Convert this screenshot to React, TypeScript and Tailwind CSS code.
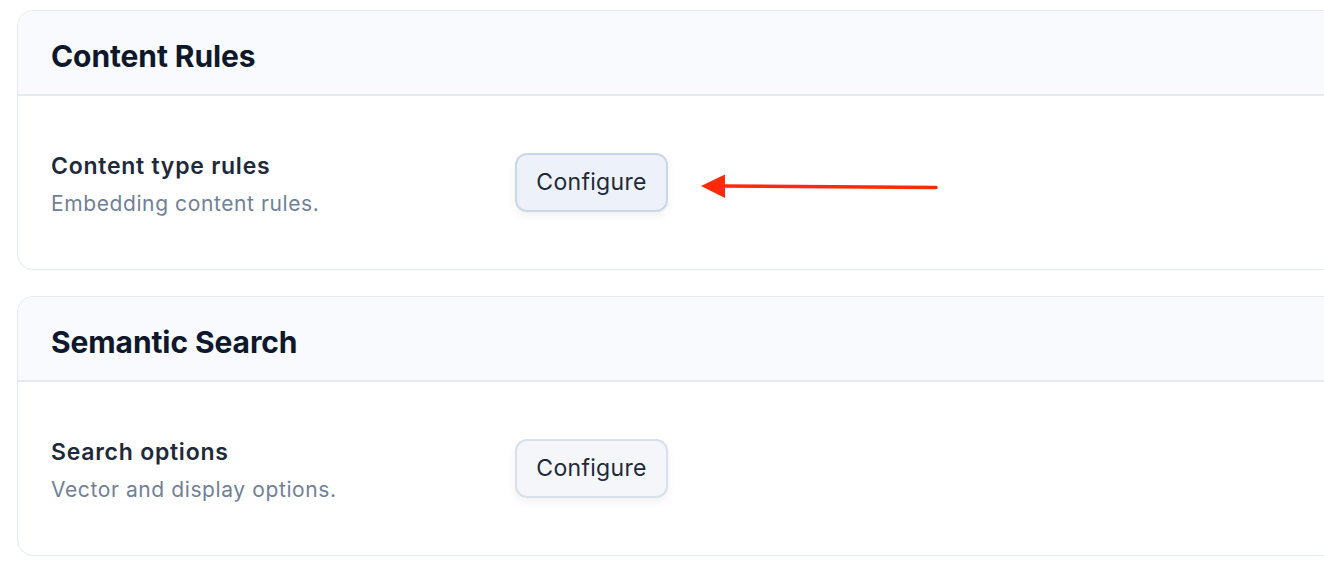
import React from "react";

function Row({ title, desc, active }: { title: string; desc: string; active?: boolean }) {
  return (
    <div className="flex items-center h-[173px] pl-[33px]">
      <div className="w-[464px] flex flex-col mt-[3px]">
        <div className="text-[23px] leading-[30px] font-semibold text-[#1e293b] tracking-[0.75px]">{title}</div>
        <div className="text-[21px] leading-[28px] mt-[9px] text-[#718096] tracking-[0.6px]">{desc}</div>
      </div>
      <button
        className={
          "h-[59px] w-[153px] rounded-[12px] border-2 text-[23px] tracking-[0.3px] text-[#1e293b] shadow-[0_4px_10px_rgba(15,23,42,0.06)] " +
          (active ? "bg-[#edf2fa] border-[#cbd6e8]" : "bg-[#f4f6fa] border-[#d8e0ec]")
        }
      >
        Configure
      </button>
      {active && (
        <svg width="240" height="28" viewBox="0 0 240 28" className="ml-[32px] mt-[8px]">
          <line x1="20" y1="13" x2="236" y2="14.5" stroke="#ff2a0a" strokeWidth="3.5" strokeLinecap="round" />
          <polygon points="1,13 25,1.5 25,25" fill="#ff2a0a" />
        </svg>
      )}
    </div>
  );
}

function Card({ heading, children }: { heading: string; children: React.ReactNode }) {
  return (
    <div className="ml-[17px] -mr-[40px] border border-[#e3e8f1] rounded-[16px] overflow-hidden bg-white">
      <div className="h-[85px] bg-[#f8fafd] border-b-2 border-[#e4e9f2] flex items-center pl-[33px] pt-[8px]">
        <h2 className="text-[30px] font-bold text-[#0f172a] tracking-[-0.1px]">{heading}</h2>
      </div>
      {children}
    </div>
  );
}

export default function App() {
  return (
    <div
      className="w-[1324px] h-[568px] bg-white overflow-hidden pt-[10px]"
      style={{ fontFamily: "Inter, 'Noto Sans', sans-serif" }}
    >
      <div className="w-[1324px]">
        <Card heading="Content Rules">
          <Row title="Content type rules" desc="Embedding content rules." active />
        </Card>
        <div className="h-[26px]" />
        <Card heading="Semantic Search">
          <Row title="Search options" desc="Vector and display options." />
        </Card>
      </div>
    </div>
  );
}
